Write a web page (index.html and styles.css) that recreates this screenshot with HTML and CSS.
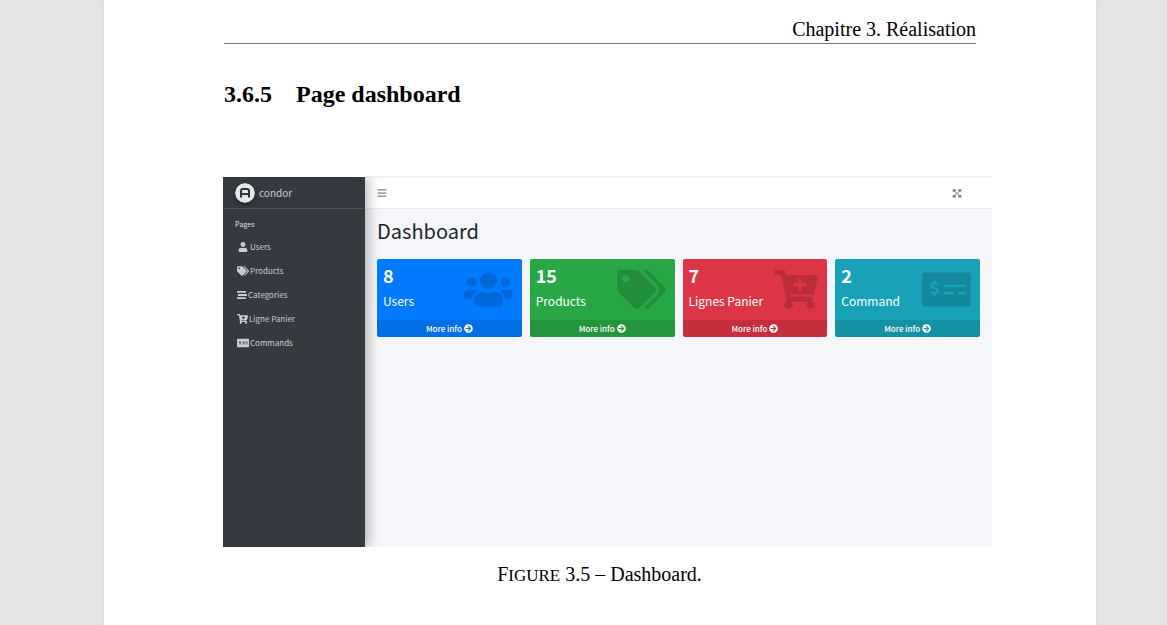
FILE: index.html
```html
<!DOCTYPE html>
<html lang="fr">
<head>
<meta charset="utf-8">
<meta name="viewport" content="width=device-width, initial-scale=1">
<title>Chapitre 3. Réalisation</title>
<link rel="stylesheet" href="styles.css">
</head>
<body>
<svg class="sprite" aria-hidden="true">
  <symbol id="i-user" viewBox="0 0 448 512"><path d="M224 256c70.7 0 128-57.3 128-128S294.7 0 224 0 96 57.3 96 128s57.3 128 128 128zm89.6 32h-16.7c-22.2 10.2-46.9 16-72.9 16s-50.6-5.8-72.9-16h-16.7C60.2 288 0 348.2 0 422.4V464c0 26.500 21.500 48 48 48h352c26.500 0 48-21.500 48-48v-41.600c0-74.200-60.200-134.400-134.400-134.400z"/></symbol>
  <symbol id="i-users" viewBox="0 0 640 512"><path d="M96 224c35.3 0 64-28.7 64-64s-28.7-64-64-64-64 28.7-64 64 28.7 64 64 64zm448 0c35.3 0 64-28.7 64-64s-28.7-64-64-64-64 28.7-64 64 28.7 64 64 64zm32 32h-64c-17.6 0-33.5 7.1-45.1 18.6 40.3 22.1 68.9 62 75.1 109.4h66c17.7 0 32-14.3 32-32v-32c0-35.3-28.7-64-64-64zm-256 0c61.9 0 112-50.1 112-112S381.9 32 320 32 208 82.1 208 144s50.1 112 112 112zm76.8 32h-8.3c-20.8 10-43.9 16-68.5 16s-47.6-6-68.5-16h-8.3C179.6 288 128 339.6 128 403.2V432c0 26.5 21.5 48 48 48h288c26.5 0 48-21.5 48-48v-28.8c0-63.6-51.6-115.2-115.2-115.2zm-223.7-13.4C161.5 263.1 145.6 256 128 256H64c-35.3 0-64 28.7-64 64v32c0 17.7 14.3 32 32 32h65.9c6.3-47.4 34.9-87.3 75.2-109.4z"/></symbol>
  <symbol id="i-tags" viewBox="0 0 640 512"><path d="M497.941 225.941L286.059 14.059A48 48 0 0 0 252.118 0H48C21.49 0 0 21.49 0 48v204.118a48 48 0 0 0 14.059 33.941l211.882 211.882c18.744 18.745 49.136 18.746 67.882 0l204.118-204.118c18.745-18.745 18.745-49.137 0-67.882zM112 160c-26.51 0-48-21.49-48-48s21.49-48 48-48 48 21.49 48 48-21.49 48-48 48zm513.941 133.823L421.823 497.941c-18.745 18.745-49.137 18.745-67.882 0l-.36-.36L527.64 323.522c16.999-16.999 26.36-39.6 26.36-63.64s-9.362-46.641-26.36-63.64L331.397 0h48.721a48 48 0 0 1 33.941 14.059l211.882 211.882c18.745 18.745 18.745 49.137 0 67.882z"/></symbol>
  <symbol id="i-stream" viewBox="0 0 512 512"><rect x="0" y="48" width="464" height="96" rx="16"/><rect x="48" y="208" width="464" height="96" rx="16"/><rect x="0" y="368" width="464" height="96" rx="16"/></symbol>
  <symbol id="i-cart" viewBox="0 0 576 512"><path d="M504.717 320H211.572l6.545 32h268.418c15.401 0 26.816 14.301 23.403 29.319l-5.517 24.276C523.112 414.668 536 433.828 536 456c0 31.202-25.519 56.444-56.824 55.994-29.823-.429-54.35-24.631-55.155-54.447-.44-16.287 6.085-31.049 16.803-41.548H231.176C241.553 426.165 248 440.326 248 456c0 31.813-26.528 57.431-58.67 55.938-28.54-1.325-51.751-24.385-53.251-52.917-1.158-22.034 10.436-41.455 28.051-51.586L93.883 64H24C10.745 64 0 53.255 0 40V24C0 10.745 10.745 0 24 0h102.529c11.401 0 21.228 8.021 23.513 19.19L159.208 64H551.99c15.401 0 26.816 14.301 23.403 29.319l-47.273 208C525.637 312.246 515.923 320 504.717 320zM408 168h-48v-40c0-8.837-7.163-16-16-16h-16c-8.837 0-16 7.163-16 16v40h-48c-8.837 0-16 7.163-16 16v16c0 8.837 7.163 16 16 16h48v40c0 8.837 7.163 16 16 16h16c8.837 0 16-7.163 16-16v-40h48c8.837 0 16-7.163 16-16v-16c0-8.837-7.163-16-16-16z"/></symbol>
  <symbol id="i-check" viewBox="0 0 640 512"><path fill-rule="evenodd" d="M32 32H608Q640 32 640 64V448Q640 480 608 480H32Q0 480 0 448V64Q0 32 32 32ZM296 192Q288 192 288 200V216Q288 224 296 224H568Q576 224 576 216V200Q576 192 568 192ZM296 288Q288 288 288 296V312Q288 320 296 320H408Q416 320 416 312V296Q416 288 408 288ZM488 288Q480 288 480 296V312Q480 320 488 320H568Q576 320 576 312V296Q576 288 568 288ZM144 144V160C118 162 102 180 102 204C102 226 117 241 136 247L178 260C191 264 188 284 174 284H148C140 284 134 281 128 277L105 300C116 310 130 316 144 317V352H176V317C202 315 218 297 218 272C218 250 204 236 184 230L142 217C130 213 133 194 147 194H172C180 194 187 197 192 200L215 177C204 167 190 161 176 160V144Z"/></symbol>
  <symbol id="i-arrow" viewBox="0 0 512 512"><path d="M256 8c137 0 248 111 248 248S393 504 256 504 8 393 8 256 119 8 256 8zm-28.9 143.6l75.5 72.4H120c-13.3 0-24 10.7-24 24v16c0 13.3 10.7 24 24 24h182.6l-75.5 72.4c-9.7 9.3-9.9 24.8-.4 34.3l11 10.9c9.4 9.4 24.6 9.4 33.9 0L404.3 273c9.4-9.4 9.4-24.6 0-33.9L271.6 106.3c-9.4-9.4-24.6-9.4-33.9 0l-11 10.9c-9.5 9.6-9.3 25.1.4 34.4z"/></symbol>
  <symbol id="i-bars" viewBox="0 0 16 16"><path d="M1 2h14v2H1zM1 7h14v2H1zM1 12h14v2H1z"/></symbol>
  <symbol id="i-expand" viewBox="0 0 16 16"><path d="M1 2h5v4H1zM10 2h5v4h-5zM1 11h5v4H1zM10 11h5v4h-5z"/><path d="M4 5l8 7M12 5l-8 7" stroke="currentColor" stroke-width="1.500"/></symbol>
</svg>

<main class="page">
  <header class="running-head">Chapitre 3. Réalisation</header>
  <h1 class="section-title"><span>3.6.5</span><span>Page dashboard</span></h1>

  <figure class="figure">
    <div class="app">
      <aside class="sidebar">
        <a class="brand" href="#">
          <svg class="brand-logo" viewBox="0 0 20 20" aria-hidden="true"><circle cx="10" cy="10" r="10" fill="#e4e6e8"/><path d="M6 14.500V8Q6 6 8 6h4q2 0 2 2v6.500M6 11h8" fill="none" stroke="#30353a" stroke-width="2"/></svg>
          <span>condor</span>
        </a>
        <nav class="menu" aria-label="Pages">
          <h2 class="menu-title">Pages</h2>
          <a class="menu-link" href="#"><svg class="menu-icon"><use href="#i-user"/></svg>Users</a>
          <a class="menu-link" href="#"><svg class="menu-icon"><use href="#i-tags"/></svg>Products</a>
          <a class="menu-link menu-link-narrow" href="#"><svg class="menu-icon"><use href="#i-stream"/></svg>Categories</a>
          <a class="menu-link menu-link-cart" href="#"><svg class="menu-icon"><use href="#i-cart"/></svg>Ligne Panier</a>
          <a class="menu-link" href="#"><svg class="menu-icon"><use href="#i-check"/></svg>Commands</a>
        </nav>
      </aside>
      <div class="main">
        <div class="topbar">
          <button class="icon-button" type="button" aria-label="Menu"><svg><use href="#i-bars"/></svg></button>
          <button class="icon-button" type="button" aria-label="Plein écran"><svg><use href="#i-expand"/></svg></button>
        </div>
        <section class="content">
          <h2 class="content-title">Dashboard</h2>
          <div class="cards">
            <article class="card card-blue">
              <div class="card-body"><strong class="card-value">8</strong><span class="card-label">Users</span></div>
              <svg class="card-icon"><use href="#i-users"/></svg>
              <a class="card-more" href="#">More info <svg><use href="#i-arrow"/></svg></a>
            </article>
            <article class="card card-green">
              <div class="card-body"><strong class="card-value">15</strong><span class="card-label">Products</span></div>
              <svg class="card-icon"><use href="#i-tags"/></svg>
              <a class="card-more" href="#">More info <svg><use href="#i-arrow"/></svg></a>
            </article>
            <article class="card card-red">
              <div class="card-body"><strong class="card-value">7</strong><span class="card-label">Lignes Panier</span></div>
              <svg class="card-icon card-icon-cart"><use href="#i-cart"/></svg>
              <a class="card-more" href="#">More info <svg><use href="#i-arrow"/></svg></a>
            </article>
            <article class="card card-teal">
              <div class="card-body"><strong class="card-value">2</strong><span class="card-label">Command</span></div>
              <svg class="card-icon"><use href="#i-check"/></svg>
              <a class="card-more" href="#">More info <svg><use href="#i-arrow"/></svg></a>
            </article>
          </div>
        </section>
      </div>
    </div>
    <figcaption class="caption">F<span class="caption-caps">IGURE</span> 3.5 – Dashboard.</figcaption>
  </figure>
</main>
</body>
</html>
```
FILE: styles.css
```css
* {
  box-sizing: border-box;
}

body {
  margin: 0;
  padding: 0 71px 0 104px;
  background: #e5e5e5;
  color: #000;
  font-family: "Liberation Serif", "Times New Roman", serif;
}

svg {
  fill: currentColor;
}

a {
  color: inherit;
  text-decoration: none;
}

.sprite {
  display: none;
}

/* Paper sheet */
.page {
  min-height: 100vh;
  padding: 15px 104px 0 119px;
  background: #fff;
  box-shadow: 0 0 5px #d8d8d8;
}

.running-head {
  margin: 0 16px 0 1px;
  border-bottom: 1px solid #777;
  font-size: 20px;
  line-height: 28px;
  text-align: right;
}

.section-title {
  display: flex;
  gap: 24px;
  margin: 34px 0 0 1px;
  font-size: 24px;
  line-height: 32px;
}

.figure {
  margin: 66px 0 0;
}

.caption {
  margin-top: 13px;
  padding-right: 16px;
  font-size: 20px;
  line-height: 28px;
  text-align: center;
}

.caption-caps {
  font-size: 17px;
}

/* Dashboard */
.app {
  display: flex;
  min-height: 371px;
  font-family: "Noto Sans CJK JP", "Noto Sans", sans-serif;
}

.sidebar {
  position: relative;
  flex: 0 0 142px;
  margin-top: 1px;
  background: #343a40;
  color: #c8cdd2;
  box-shadow: 4px 0 10px rgba(0, 0, 0, 0.25);
  clip-path: inset(0 -16px 0 0);
}

.brand {
  display: flex;
  align-items: center;
  gap: 4px;
  height: 32px;
  padding: 0 12px;
  border-bottom: 1px solid #4b545c;
  font-size: 10px;
}

.brand-logo {
  width: 20px;
  height: 20px;
  border-radius: 50%;
  box-shadow: 0 2px 4px rgba(0, 0, 0, 0.4);
}

.menu {
  display: flex;
  flex-direction: column;
  padding: 4px 12px;
}

.menu-title {
  margin: 0;
  font-size: 7px;
  font-weight: 500;
  line-height: 22px;
}

.menu-link {
  display: flex;
  align-items: center;
  gap: 1px;
  padding-left: 2px;
  font-size: 8px;
  line-height: 24px;
}

.menu-icon {
  width: 12px;
  height: 10px;
}

.menu-link-narrow .menu-icon {
  width: 10px;
}

.menu-link-cart .menu-icon {
  width: 11px;
}

.main {
  flex: 1;
  min-width: 0;
  background: #f4f6f9;
}

.topbar {
  display: flex;
  align-items: center;
  justify-content: space-between;
  height: 33px;
  padding: 0 30px 0 12px;
  border-top: 2px solid #f0f1f3;
  border-bottom: 1px solid #e8ebee;
  background: #fff;
  color: #808080;
}

.icon-button {
  display: flex;
  padding: 0;
  border: 0;
  background: none;
  color: inherit;
}

.icon-button svg {
  width: 10px;
  height: 10px;
}

.content {
  padding: 6px 12px;
}

.content-title {
  margin: 0 0 12px;
  color: #212529;
  font-size: 20px;
  font-weight: 400;
  line-height: 32px;
}

.cards {
  display: grid;
  grid-template-columns: repeat(4, 1fr);
  gap: 8px;
}

.card {
  position: relative;
  overflow: hidden;
  border-radius: 2px;
  color: #fff;
}

.card-blue {
  background: #007bff;
}

.card-green {
  background: #28a745;
}

.card-red {
  background: #dc3545;
}

.card-teal {
  background: #17a2b8;
}

.card-body {
  display: flex;
  flex-direction: column;
  padding: 3px 6px 6px;
}

.card-value {
  font-size: 18px;
  line-height: 26px;
}

.card-label {
  font-size: 12px;
  line-height: 26px;
}

.card-icon {
  position: absolute;
  top: 11px;
  right: 9px;
  width: 49px;
  height: 39px;
  color: rgba(0, 0, 0, 0.15);
}

.card-icon-cart {
  width: 44px;
}

.card-more {
  display: flex;
  align-items: center;
  justify-content: center;
  gap: 2px;
  background: rgba(0, 0, 0, 0.1);
  font-size: 8px;
  font-weight: 500;
  line-height: 17px;
}

.card-more svg {
  width: 9px;
  height: 9px;
}
```
